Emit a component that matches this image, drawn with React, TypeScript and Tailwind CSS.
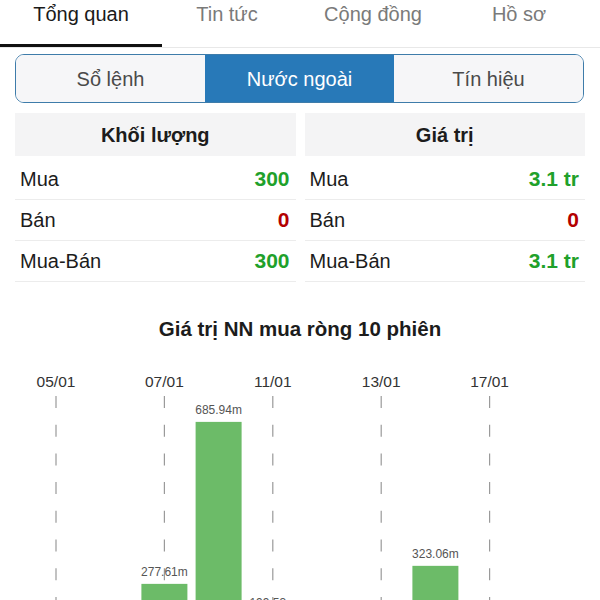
import React from "react";

const tabs = ["Tổng quan", "Tin tức", "Cộng đồng", "Hồ sơ"];
const segs = ["Sổ lệnh", "Nước ngoài", "Tín hiệu"];

type Row = { label: string; value: string; color: string };

const vol: Row[] = [
  { label: "Mua", value: "300", color: "text-[#1fa12b]" },
  { label: "Bán", value: "0", color: "text-[#b30000]" },
  { label: "Mua-Bán", value: "300", color: "text-[#1fa12b]" },
];
const val: Row[] = [
  { label: "Mua", value: "3.1 tr", color: "text-[#1fa12b]" },
  { label: "Bán", value: "0", color: "text-[#b30000]" },
  { label: "Mua-Bán", value: "3.1 tr", color: "text-[#1fa12b]" },
];

function Table({ title, rows }: { title: string; rows: Row[] }) {
  return (
    <div className="flex-1 flex flex-col">
      <div className="h-[43px] bg-[#f4f4f5] flex items-center justify-center font-bold text-[20px] text-[#1c1c1c]">
        {title}
      </div>
      <div className="mt-[3px] flex flex-col">
        {rows.map((r) => (
          <div
            key={r.label}
            className="h-[41px] border-b border-[#ececec] flex items-center justify-between pl-[5px] pr-[6px] text-[20px]"
          >
            <span className="text-[#1c1c1c]">{r.label}</span>
            <span className={`font-bold text-[21px] ${r.color}`}>{r.value}</span>
          </div>
        ))}
      </div>
    </div>
  );
}

const step = 54.2;
const x0 = 56;
const base = 333;
const k = 0.3967;
const dates: [number, string][] = [
  [0, "05/01"],
  [2, "07/01"],
  [4, "11/01"],
  [6, "13/01"],
  [8, "17/01"],
];
const bars: [number, number][] = [
  [2, 277.61],
  [3, 685.94],
  [4, 199.53],
  [7, 323.06],
];

function Chart() {
  return (
    <svg width="600" height="340" className="block" style={{ fontFamily: '"Liberation Sans", Arial, sans-serif' }}>
      {dates.map(([i, d]) => {
        const x = x0 + step * i;
        return (
          <g key={d}>
            <text x={x} y={26} textAnchor="middle" fontSize="15.5" fill="#333">
              {d}
            </text>
            <line x1={x} x2={x} y1={35} y2={340} stroke="#9a9a9a" strokeWidth="1.2" strokeDasharray="12 16.7" />
          </g>
        );
      })}
      {bars.map(([i, v]) => {
        const cx = x0 + step * i;
        const h = v * k;
        const top = base - h;
        return (
          <g key={i}>
            <rect x={cx - 23} y={top} width={46} height={h} fill="#6cbb68" />
            <text x={cx} y={top - 8} textAnchor="middle" fontSize="12" fill="#555">
              {v.toFixed(2)}m
            </text>
          </g>
        );
      })}
    </svg>
  );
}

export default function App() {
  return (
    <div
      className="w-[600px] h-[600px] overflow-hidden bg-white"
      style={{ fontFamily: '"Liberation Sans", Arial, sans-serif' }}
    >
      <div className="border-b border-[#e8e8e8]">
        <div className="flex h-[44px] pl-[8px]">
          {tabs.map((t, i) => (
            <div
              key={t}
              className={`w-[146px] text-center text-[20px] leading-[28px] ${
                i === 0 ? "text-[#1a1a1a]" : "text-[#7a7a7a]"
              }`}
            >
              {t}
            </div>
          ))}
        </div>
        <div className="w-[162px] h-[3px] bg-[#111]" />
      </div>
      <div className="mt-[6px] ml-[15px] mr-[16px] h-[49px] flex rounded-[9px] border-[1.5px] border-[#3e7caa] overflow-hidden">
        {segs.map((s, i) => (
          <div
            key={s}
            className={`flex-1 flex items-center justify-center text-[20px] ${
              i === 1 ? "bg-[#2879b8] text-white" : "bg-[#f6f6f8] text-[#4a4a4a]"
            }`}
          >
            {s}
          </div>
        ))}
      </div>
      <div className="mt-[10px] ml-[15px] mr-[15px] flex gap-[9px]">
        <Table title="Khối lượng" rows={vol} />
        <Table title="Giá trị" rows={val} />
      </div>
      <div className="mt-[33px] text-center font-bold text-[20.5px] leading-[28px] text-[#1c1c1c]">
        Giá trị NN mua ròng 10 phiên
      </div>
      <div className="mt-[18px]">
        <Chart />
      </div>
    </div>
  );
}
